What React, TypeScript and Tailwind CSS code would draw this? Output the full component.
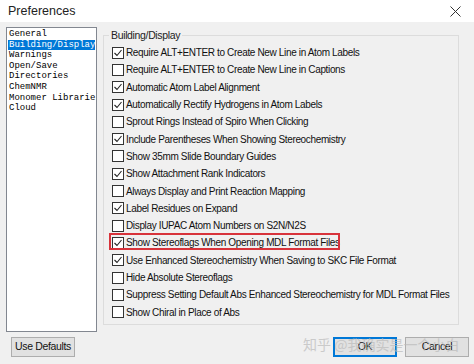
import React from 'react';

const categories = [
  'General',
  'Building/Display',
  'Warnings',
  'Open/Save',
  'Directories',
  'ChemNMR',
  'Monomer Libraries',
  'Cloud',
];

const options: { label: string; checked: boolean; marked?: boolean }[] = [
  { label: 'Require ALT+ENTER to Create New Line in Atom Labels', checked: true },
  { label: 'Require ALT+ENTER to Create New Line in Captions', checked: false },
  { label: 'Automatic Atom Label Alignment', checked: true },
  { label: 'Automatically Rectify Hydrogens in Atom Labels', checked: true },
  { label: 'Sprout Rings Instead of Spiro When Clicking', checked: false },
  { label: 'Include Parentheses When Showing Stereochemistry', checked: true },
  { label: 'Show 35mm Slide Boundary Guides', checked: false },
  { label: 'Show Attachment Rank Indicators', checked: true },
  { label: 'Always Display and Print Reaction Mapping', checked: false },
  { label: 'Label Residues on Expand', checked: true },
  { label: 'Display IUPAC Atom Numbers on S2N/N2S', checked: false },
  { label: 'Show Stereoflags When Opening MDL Format Files', checked: true, marked: true },
  { label: 'Use Enhanced Stereochemistry When Saving to SKC File Format', checked: true },
  { label: 'Hide Absolute Stereoflags', checked: false },
  { label: 'Suppress Setting Default Abs Enhanced Stereochemistry for MDL Format Files', checked: false },
  { label: 'Show Chiral in Place of Abs', checked: false },
];

function CheckBox({ checked }: { checked: boolean }) {
  return (
    <span className="flex h-[12px] w-[12px] shrink-0 items-center justify-center border border-[#333] bg-white">
      {checked && (
        <svg width="10" height="10" viewBox="0 0 10 10">
          <path d="M1.5 5 L4 7.5 L8.5 2" fill="none" stroke="#222" strokeWidth="1.1" />
        </svg>
      )}
    </span>
  );
}

function OptionRow({ label, checked, marked }: { label: string; checked: boolean; marked?: boolean }) {
  return (
    <div className="relative flex h-[17.3px] items-center gap-[2px]">
      <CheckBox checked={checked} />
      <span className="whitespace-nowrap">{label}</span>
      {/* red annotation box */}
      {marked && (
        <div className="pointer-events-none absolute left-[-3px] top-[-1px] h-[17px] w-[231px] border-2 border-[#d8333b]" />
      )}
    </div>
  );
}

export default function App() {
  return (
    <div className="h-[364px] w-[474px] overflow-hidden bg-[#f0f0f0] font-['Liberation_Sans',Arial,sans-serif] text-[10px] tracking-[-0.35px] text-[#111]">
      {/* title bar */}
      <div className="flex h-[22px] items-center justify-between bg-white pl-[8px] pr-[13px]">
        <span className="text-[12.5px] tracking-normal text-[#222]">Preferences</span>
        <svg width="11" height="11" viewBox="0 0 11 11">
          <path d="M0.5 0.5 L10.5 10.5 M10.5 0.5 L0.5 10.5" stroke="#333" strokeWidth="1" />
        </svg>
      </div>

      <div className="flex items-start">
        {/* category list */}
        <div className="ml-[6px] mt-[5px] h-[305px] w-[91px] shrink-0 overflow-hidden border border-[#828790] bg-white p-[1px] font-['Liberation_Mono',monospace] text-[9px] leading-[10.6px] tracking-normal text-black">
          {categories.map((c, i) => (
            <div
              key={c}
              className={`whitespace-nowrap px-[1px] ${i === 1 ? 'bg-[#0078d7] text-white' : ''}`}
            >
              {c}
            </div>
          ))}
        </div>

        {/* group box */}
        <fieldset className="ml-[6px] mt-[6px] h-[297px] w-[356px] min-w-0 shrink-0 border border-[#dcdcdc] px-[8px]">
          <legend className="ml-[-3px] px-[2px] text-[10.5px] leading-[14px] text-[#222]">Building/Display</legend>
          <div className="pt-[2px]">
            {options.map((o) => (
              <OptionRow key={o.label} {...o} />
            ))}
          </div>
        </fieldset>
      </div>

      {/* footer buttons */}
      <div className="relative mt-[5px] flex items-center px-[11px]">
        <button className="h-[20px] w-[64px] whitespace-nowrap border border-[#adadad] bg-[#e1e1e1] text-[10.5px] text-[#111]">
          Use Defaults
        </button>
        <div className="ml-auto flex gap-[8px]">
          <button className="h-[20px] w-[64px] border-2 border-[#0078d7] bg-[#e1e1e1] text-[10.5px] text-[#111]">
            OK
          </button>
          <button className="mr-[-6px] h-[20px] w-[64px] border border-[#adadad] bg-[#e1e1e1] text-[10.5px] text-[#111]">
            Cancel
          </button>
        </div>
        {/* watermark */}
        <div className="pointer-events-none absolute left-[303px] top-[-3px] whitespace-nowrap font-['Noto_Sans_CJK_SC',sans-serif] text-[14px] tracking-normal text-[#bbb] opacity-70">
          知乎 @我确实是一个小白
        </div>
      </div>
    </div>
  );
}
